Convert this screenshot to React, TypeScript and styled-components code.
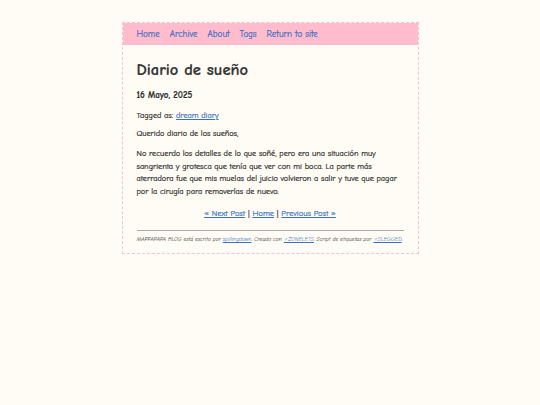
import styled, { createGlobalStyle } from "styled-components";

const GlobalStyle = createGlobalStyle`
  body {
    margin: 0;
    background: #fffcf5;
    font-family: "Comic Sans MS", "Comic Neue", "Open Sans", sans-serif;
    color: #2a2a2a;
    -webkit-text-stroke: 0.2px currentColor;
  }
`;

const Page = styled.div`
  padding-top: 22px;
  display: flex;
  justify-content: center;
`;

const Container = styled.div`
  width: 297px;
  box-sizing: border-box;
  border: 1px dashed #f5c2d2;
  background: #fffcf5;
`;

const Nav = styled.nav`
  background: #ffbccd;
  height: 22px;
  display: flex;
  align-items: center;
  gap: 10px;
  padding: 0 14px;
  font-size: 9px;
`;

const NavLink = styled.a`
  color: #3a6fc4;
  text-decoration: none;
`;

const Main = styled.main`
  padding: 0 14px 10px;
`;

const Title = styled.h1`
  font-size: 16.5px;
  font-weight: 700;
  color: #333;
  margin: 13px 0 0;
  line-height: 24px;
`;

const DateLine = styled.p`
  font-size: 9px;
  font-weight: 700;
  line-height: 12px;
  margin: 7px 0 0;
`;

const Para = styled.p<{ $top?: number }>`
  font-size: 8.2px;
  line-height: 12.5px;
  margin: ${(p) => p.$top ?? 8}px 0 0;
`;

const Link = styled.a`
  color: #3a6fc4;
  text-decoration: underline;
`;

const PostNav = styled.div`
  text-align: center;
  font-size: 8.4px;
  line-height: 12px;
  margin-top: 9px;
`;

const Rule = styled.hr`
  border: none;
  border-top: 1px solid #aaa;
  margin: 11px 0 4px;
`;

const Footer = styled.footer`
  font-size: 5.6px;
  font-style: italic;
  line-height: 8px;
  -webkit-text-stroke: 0;
`;

export default function App() {
  return (
    <>
      <GlobalStyle />
      <Page>
        <Container>
          <Nav>
            <NavLink href="#">Home</NavLink>
            <NavLink href="#">Archive</NavLink>
            <NavLink href="#">About</NavLink>
            <NavLink href="#">Tags</NavLink>
            <NavLink href="#">Return to site</NavLink>
          </Nav>
          <Main>
            <Title>Diario de sueño</Title>
            <DateLine>16 Mayo, 2025</DateLine>
            <Para $top={9}>
              Tagged as: <Link href="#">dream diary</Link>
            </Para>
            <Para $top={5.5}>Querido diario de los sueños,</Para>
            <Para $top={7.5}>
              No recuerdo los detalles de lo que soñé, pero era una situación muy
              sangrienta y grotesca que tenía que ver con mi boca. La parte más
              aterradora fue que mis muelas del juicio volvieron a salir y tuve que
              pagar por la cirugía para removerlas de nuevo.
            </Para>
            <PostNav>
              <Link href="#">« Next Post</Link> | <Link href="#">Home</Link> |{" "}
              <Link href="#">Previous Post »</Link>
            </PostNav>
            <Rule />
            <Footer>
              MAPPAPAPA BLOG está escrito por <Link href="#">spillingdown</Link>.
              Creado con <Link href="#">♂ZONELETS</Link>. Script de etiquetas por{" "}
              <Link href="#">♂SLEGGED</Link>.
            </Footer>
          </Main>
        </Container>
      </Page>
    </>
  );
}
